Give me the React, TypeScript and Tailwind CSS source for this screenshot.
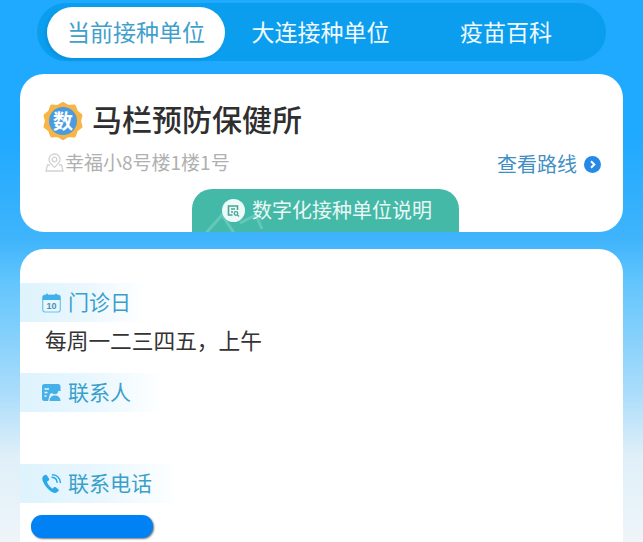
const font = { fontFamily: '"Noto Sans CJK SC", "Noto Sans", sans-serif' };

function SectionTitle({ icon, title, width }: { icon: React.ReactNode; title: string; width: string }) {
  return (
    <div className={`flex h-[39px] items-center gap-[7px] bg-gradient-to-r from-[#def3fd] via-[#e9f7fe] to-white pl-[22px] ${width}`}>
      {icon}
      <span className="pb-[3px] text-[21px] leading-none text-[#3a9fcb]">{title}</span>
    </div>
  );
}

function CalendarIcon() {
  return (
    <svg width="19" height="20" viewBox="0 0 19 20">
      <rect x="0.7" y="2" width="17.6" height="17" rx="2.5" fill="#e8f6fd" stroke="#6cc3ec" strokeWidth="1.2" />
      <path d="M0.7 7V4.500A2.500 2.500 0 0 1 3.200 2h12.600a2.500 2.500 0 0 1 2.500 2.500V7z" fill="#3fb0ea" />
      <rect x="4" y="0.5" width="2" height="3.4" rx="1" fill="#3fb0ea" />
      <rect x="13" y="0.5" width="2" height="3.4" rx="1" fill="#3fb0ea" />
      <text x="9.5" y="16" textAnchor="middle" fontSize="9" fontWeight="700" fill="#4a8fb5" fontFamily="Liberation Sans, sans-serif">10</text>
    </svg>
  );
}

function ContactIcon() {
  return (
    <svg width="19" height="19" viewBox="0 0 19 19">
      <path d="M2.500 1H16a2.500 2.500 0 0 1 2.500 2.500V8H14L8 11l-2 7H2.500A2.500 2.500 0 0 1 0 15.500v-12A2.500 2.500 0 0 1 2.500 1z" fill="#45b0ea" />
      <circle cx="12.800" cy="7.800" r="3.400" fill="#45b0ea" />
      <path d="M7.500 18c0-3.800 2.200-5.600 5.300-5.600s5.700 1.800 5.700 5.600z" fill="#45b0ea" />
      <path d="M2.500 6h4.500M2.500 9.500h3M2.500 13h2" stroke="#e6f6fd" strokeWidth="1.300" />
    </svg>
  );
}

function PhoneIcon() {
  return (
    <svg width="19" height="20" viewBox="0 0 19 20" fill="none">
      <path d="M2 1.500c-1.600 1-2.200 3-1.200 5.600 1.400 3.800 4.600 8 8.200 10.400 2.400 1.600 4.400 1.800 6 .7l1.400-1.200c.6-.6.5-1.300-.1-1.800l-2.600-2c-.6-.4-1.200-.4-1.700.1l-1 1c-.4.3-.8.3-1.200 0-1.800-1.400-3.600-3.600-4.600-5.800-.2-.5-.1-.9.3-1.200l1.200-.8c.6-.4.7-1 .4-1.700L5 1.600C4.600.8 3.800.6 3.100.9z" fill="#2aa9ec" />
      <path d="M10 3.200c2.800.2 4.800 2.200 5 5M10.500.8c4.400.2 7.500 3.400 7.800 7.700" stroke="#2aa9ec" strokeWidth="1.500" strokeLinecap="round" />
    </svg>
  );
}

function Badge() {
  return (
    <div className="relative flex h-[40px] w-[40px] items-center justify-center">
      <svg className="absolute inset-0" width="40" height="40" viewBox="0 0 40 40">
        <path
          d="M20 3l5 3 6-.5 2 5.500 4.500 3.500-1.500 5.500 1.500 5.500-4.500 3.500-2 5.500-6-.5-5 3-5-3-6 .5-2-5.500-4.500-3.500L4 20l-1.500-5.500L7 11l2-5.500L15 6z"
          fill="#f6b545"
          stroke="#f6b545"
          strokeWidth="4"
          strokeLinejoin="round"
        />
      </svg>
      <div className="relative flex h-[28px] w-[28px] items-center justify-center rounded-full bg-[#4a9be0] text-[20px] leading-none font-bold text-white">
        数
      </div>
    </div>
  );
}

export default function App() {
  return (
    <div
      className="flex h-[542px] w-[643px] flex-col overflow-hidden bg-[linear-gradient(180deg,#1fa9ff_0%,#1fa9ff_25%,#3fb4fc_44%,#62c5fd_52%,#a8dcfb_72%,#dfeff8_84%,#eef5f9_100%)] px-[20px] pt-[3px]"
      style={font}
    >
      {/* tabs */}
      <div className="mx-[17px] flex h-[58px] items-center rounded-[29px] bg-[#0b9eee] pl-[10px]">
        <div className="flex h-[51px] w-[178px] items-center justify-center rounded-[26px] bg-white pb-[2px] text-[23px] text-[#3fa0cc] shadow-[-2px_2px_3px_rgba(0,110,190,0.25)]">
          当前接种单位
        </div>
        <div className="mb-[2px] ml-[13px] w-[165px] text-center text-[23px] text-[#f0faff]">大连接种单位</div>
        <div className="mb-[2px] ml-[33px] w-[140px] text-center text-[23px] text-[#f0faff]">疫苗百科</div>
      </div>

      {/* unit card */}
      <div className="mt-[13px] flex h-[158px] flex-col rounded-[24px] bg-white pt-[27px]">
        <div className="flex items-center gap-[9px] pl-[23px]">
          <Badge />
          <span className="-mt-[6px] text-[30px] leading-[40px] font-medium text-[#2f2f2f]">马栏预防保健所</span>
        </div>
        <div className="mt-[5px] flex items-center justify-between pr-[22px] pl-[25px]">
          <div className="flex items-center gap-[1px]">
            <svg width="19" height="19" viewBox="0 0 19 19" fill="none" stroke="#d2d2d2" strokeWidth="1.300">
              <circle cx="9.500" cy="6.500" r="2.300" />
              <path d="M9.500 1C6.300 1 4 3.400 4 6.400c0 2.400 2.200 4.900 5.500 8 3.300-3.100 5.500-5.600 5.500-8C15 3.400 12.700 1 9.500 1z" />
              <path d="M5 12H2.500L1 18h17l-1.500-6H14" />
            </svg>
            <span className="text-[19px] leading-[28px] text-[#b0b0b0]">幸福小8号楼1楼1号</span>
          </div>
          <div className="mt-[4px] flex items-center gap-[7px]">
            <span className="text-[20px] leading-[28px] text-[#3f8fc4]">查看路线</span>
            <svg width="17" height="17" viewBox="0 0 17 17" fill="none">
              <circle cx="8.500" cy="8.500" r="8.500" fill="#2589e8" />
              <path d="M7 5.200l3.300 3.300L7 11.800" stroke="#fff" strokeWidth="2" />
            </svg>
          </div>
        </div>
        <div className="relative mt-auto ml-[172px] flex h-[43px] w-[267px] items-center gap-[7px] overflow-hidden rounded-t-[20px] bg-[#45b9a8] pb-[1px] pl-[30px]">
          <svg className="absolute top-[20px] left-[12px]" width="70" height="24" viewBox="0 0 70 24" fill="none" stroke="#63c8b8" strokeWidth="3">
            <path d="M2 24L18 6l12 18M36 14l16-8 6 14" />
          </svg>
          <svg className="relative" width="23" height="23" viewBox="0 0 23 23" fill="none">
            <circle cx="11.500" cy="11.500" r="11.500" fill="#eefaf7" />
            <path d="M15.500 11V7h-9v9h4" stroke="#45a596" strokeWidth="1.600" />
            <path d="M9 10h4M9 13h2" stroke="#45a596" strokeWidth="1.400" />
            <circle cx="14" cy="14.500" r="1.800" stroke="#45a596" strokeWidth="1.300" />
            <path d="M15.500 16l1.500 1.500" stroke="#45a596" strokeWidth="1.300" />
          </svg>
          <span className="relative text-[20px] leading-none text-[#e9f8f5]">数字化接种单位说明</span>
        </div>
      </div>

      {/* details card */}
      <div className="mt-[17px] flex-1 rounded-t-[24px] bg-white pt-[34px]">
        <SectionTitle icon={<CalendarIcon />} title="门诊日" width="w-[125px]" />
        <div className="pt-[4px] pl-[25px] text-[21.7px] leading-[28px] text-[#333333]">每周一二三四五，上午</div>
        <div className="mt-[19px]">
          <SectionTitle icon={<ContactIcon />} title="联系人" width="w-[145px]" />
        </div>
        <div className="mt-[52px]">
          <SectionTitle icon={<PhoneIcon />} title="联系电话" width="w-[160px]" />
        </div>
        <div className="mt-[12px] ml-[11px] h-[23px] w-[122px] rounded-[11px] bg-[#0082f5] shadow-[1px_1px_2px_rgba(60,60,60,0.7)]" />
      </div>
    </div>
  );
}
